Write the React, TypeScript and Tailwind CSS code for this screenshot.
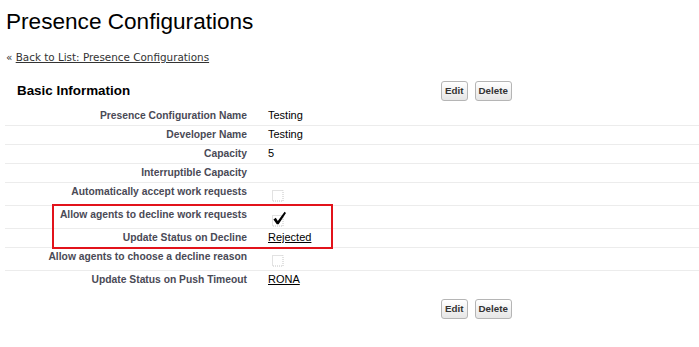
import React from 'react';

type Row = {
    label: string;
    value?: string;
    kind?: 'text' | 'link' | 'check' | 'uncheck';
    height: string;
};

const ROWS: Row[] = [
    { label: 'Presence Configuration Name', value: 'Testing', height: 'h-[19px]' },
    { label: 'Developer Name', value: 'Testing', height: 'h-[19px]' },
    { label: 'Capacity', value: '5', height: 'h-[19px]' },
    { label: 'Interruptible Capacity', height: 'h-[19px]' },
    { label: 'Automatically accept work requests', kind: 'uncheck', height: 'h-[23px]' },
    { label: 'Allow agents to decline work requests', kind: 'check', height: 'h-[23px]' },
    { label: 'Update Status on Decline', value: 'Rejected', kind: 'link', height: 'h-[19px]' },
    { label: 'Allow agents to choose a decline reason', kind: 'uncheck', height: 'h-[23px]' },
    { label: 'Update Status on Push Timeout', value: 'RONA', kind: 'link', height: 'h-[19px]' },
];

const EmptyBox = () => (
    <svg width="12" height="12" viewBox="0 0 12 12" className="mt-[5px] ml-[4px]">
        <rect x="0.5" y="0.5" width="10.5" height="10.5" fill="none" stroke="#c4c4c4" strokeDasharray="1 1" />
    </svg>
);

const CheckedBox = () => (
    <svg width="16" height="18" viewBox="0 0 16 18" className="mt-[2px] ml-[4px]">
        <rect x="0.5" y="5.5" width="10.5" height="10.5" fill="none" stroke="#c4c4c4" strokeDasharray="1 1" />
        <path d="M1.4 9.4 L3.8 7.8 L5.8 11 L12.6 1.8 L14 2.9 L6.6 14.2 L4.8 14.2 Z" fill="#000" />
    </svg>
);

const Buttons = () => (
    <div className="flex gap-[7px]">
        {['Edit', 'Delete'].map((b) => (
            <button
                key={b}
                className="h-[20px] px-[3px] border border-[#b5b5b5] rounded-[3px] bg-linear-to-b from-white to-[#e6e6e6] text-[9.8px] font-bold text-[#333] leading-none"
            >
                {b}
            </button>
        ))}
    </div>
);

export default function App() {
    return (
        <div className="w-[699px] h-[347px] bg-white font-['Liberation_Sans',Arial,sans-serif] overflow-hidden">
            <h1 className="ml-[6px] pt-[8px] text-[22.6px] leading-[27px] text-black">Presence Configurations</h1>

            <div className="ml-[6px] mt-[16px] font-['DejaVu_Sans',Verdana,sans-serif] text-[10.4px] leading-[13px] text-[#333]">
                « <span className="underline">Back to List: Presence Configurations</span>
            </div>

            {/* Header */}
            <div className="mt-[16px] flex items-center h-[21px]">
                <h2 className="w-[441px] pl-[17px] text-[13.4px] font-bold text-black leading-none">Basic Information</h2>
                <Buttons />
            </div>

            {/* Detail list */}
            <div className="relative ml-[5px] mt-[6px]">
                {ROWS.map((r, i) => (
                    <div
                        key={r.label}
                        className={`flex ${r.height} ${i < ROWS.length - 1 ? 'border-b border-[#ececec]' : ''}`}
                    >
                        <div className="w-[247px] pr-[5px] pt-[2px] text-right text-[10.3px] font-bold leading-[13px] text-[#4a4a56] whitespace-nowrap">
                            {r.label}
                        </div>
                        <div className="pl-[16px] pt-[2px] text-[11px] leading-[13px] text-black">
                            {r.kind === 'uncheck' && <EmptyBox />}
                            {r.kind === 'check' && <CheckedBox />}
                            {r.kind === 'link' && <span className="underline">{r.value}</span>}
                            {!r.kind && r.value}
                        </div>
                    </div>
                ))}

                {/* highlight annotation */}
                <div className="absolute left-[47px] top-[97px] w-[281px] h-[45px] border-2 border-[#e2131b] pointer-events-none" />
            </div>

            <div className="mt-[9px] flex">
                <div className="w-[441px]" />
                <Buttons />
            </div>
        </div>
    );
}
